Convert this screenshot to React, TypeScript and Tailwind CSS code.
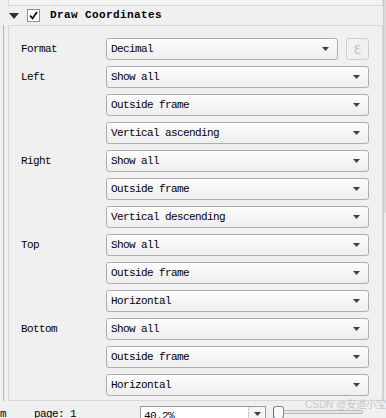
import { ReactNode } from 'react'

const mono = "font-['Liberation_Mono',monospace]"

const rows: { label?: string; value: string; epsilon?: boolean }[] = [
  { label: 'Format', value: 'Decimal', epsilon: true },
  { label: 'Left', value: 'Show all' },
  { value: 'Outside frame' },
  { value: 'Vertical ascending' },
  { label: 'Right', value: 'Show all' },
  { value: 'Outside frame' },
  { value: 'Vertical descending' },
  { label: 'Top', value: 'Show all' },
  { value: 'Outside frame' },
  { value: 'Horizontal' },
  { label: 'Bottom', value: 'Show all' },
  { value: 'Outside frame' },
  { value: 'Horizontal' },
]

function Arrow() {
  return (
    <svg width="7" height="4" viewBox="0 0 7 4">
      <polygon points="0,0 7,0 3.5,4" fill="#404040" />
    </svg>
  )
}

function Combo({ value, className = '' }: { value: string; className?: string }) {
  return (
    <div
      className={`h-[22px] flex items-center justify-between rounded-[3px] border border-[#adadad] bg-gradient-to-b from-[#fdfdfd] to-[#eeeeee] pl-[4px] pr-[8px] ${className}`}
    >
      <span className="text-[11px] leading-none tracking-[-0.6px] text-black">{value}</span>
      <Arrow />
    </div>
  )
}

function Row({ label, children }: { label?: string; children: ReactNode }) {
  return (
    <div className="flex items-center h-[22px]">
      <span className="w-[85px] text-[11px] leading-none tracking-[-0.6px] text-black">{label}</span>
      {children}
    </div>
  )
}

export default function App() {
  return (
    <div className={`relative w-[386px] h-[418px] overflow-hidden bg-[#f0f0f0] ${mono}`}>
      <div className="flex h-[401px]">
        <div className="w-[383px] flex flex-col">
          {/* tail of previous group */}
          <div className="ml-[8px] h-[6px] border-x border-b border-[#d6d6d6] bg-[#f4f4f4]" />

          {/* group header */}
          <div className="h-[19px] flex items-center">
            <svg width="10" height="6" viewBox="0 0 10 6" className="ml-[9px]">
              <polygon points="0,0 10,0 5,6" fill="#303030" />
            </svg>
            <div className="ml-[8px] w-[13px] h-[13px] border border-[#8f8f8f] bg-white flex items-center justify-center">
              <svg width="9" height="9" viewBox="0 0 9 9">
                <polyline points="1,4.5 3.5,7.5 8,1" fill="none" stroke="#000" strokeWidth="1.6" />
              </svg>
            </div>
            <span className="ml-[10px] text-[11px] font-bold tracking-[0.4px] leading-none text-black">
              Draw Coordinates
            </span>
          </div>

          {/* group body */}
          <div className="flex-1 flex">
            <div className="w-[3px]" />
            <div className="w-[5px] border-l border-[#b4b4b4]" />
            <div className="flex-1 border border-[#d8d8d8] pt-[12px] pl-[12px] flex flex-col gap-[6px]">
              {rows.map((r, i) => (
                <Row key={i} label={r.label}>
                  {r.epsilon ? (
                    <>
                      <Combo value={r.value} className="w-[232px]" />
                      <div className="ml-[8px] w-[23px] h-[22px] rounded-[3px] border border-[#cfcfcf] flex items-center justify-center text-[15px] leading-none text-[#c4c4c4] font-['DejaVu_Sans',sans-serif]">
                        ε
                      </div>
                    </>
                  ) : (
                    <Combo value={r.value} className="w-[263px]" />
                  )}
                </Row>
              ))}
            </div>
          </div>
        </div>

        {/* scrollbar strip */}
        <div className="w-[3px] flex flex-col border-l border-[#cdcdcd]">
          <div className="h-[213px] bg-[#dadada]" />
          <div className="flex-1 bg-[#ececec]" />
        </div>
      </div>

      {/* status bar */}
      <div className="h-[17px] flex items-start">
        <span className="mt-[8px] text-[11px] leading-none tracking-[-0.6px] text-black">m</span>
        <span className="ml-[28px] mt-[8px] text-[11px] leading-none tracking-[-0.6px] text-black">page: 1</span>
        <div className="ml-[64px] mt-[5px] w-[126px] h-[16px] flex bg-white border border-[#9a9a9a]">
          <span className="flex-1 pl-[3px] pt-[4px] text-[11px] leading-none tracking-[-0.6px] text-black">40.2%</span>
          <div className="w-[17px] flex items-center justify-center border-l border-[#cfcfcf] bg-[#f4f4f4]">
            <Arrow />
          </div>
        </div>
        <div className="ml-[7px] mt-[5px] relative w-[90px] h-[13px]">
          <div className="absolute left-[6px] right-0 top-[4px] h-[4px] rounded-full border border-[#b8b8b8] bg-[#e6e6e6]" />
          <div className="absolute left-0 top-0 w-[11px] h-[13px] rounded-[3px] border border-[#8a8a8a] border-l-[#2a7fd4] bg-[#f8f8f8]" />
        </div>
      </div>

      <span className="absolute left-[305px] top-[400px] whitespace-nowrap text-[10px] leading-none text-[#c6c6c6] font-['Liberation_Sans','Noto_Sans_CJK_SC',sans-serif]">
        CSDN @安迪小宝
      </span>
    </div>
  )
}
